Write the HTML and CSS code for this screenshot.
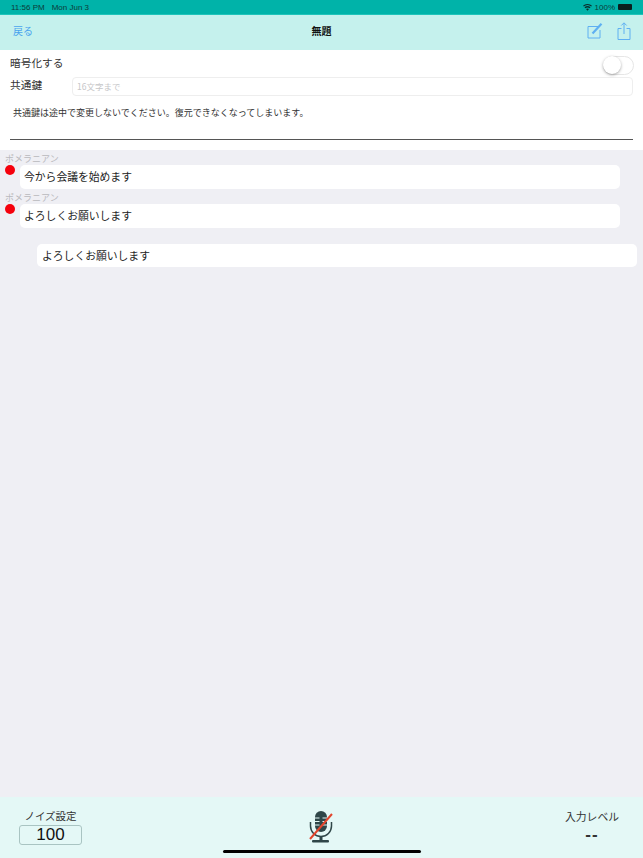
FILE: index.html
```html
<!DOCTYPE html>
<html lang="ja">
<head>
<meta charset="utf-8">
<title>無題</title>
<link rel="stylesheet" href="styles.css">
</head>
<body>
<div class="app">
  <div class="status">
    <span class="status-time">11:56 PM</span><span class="status-date">Mon Jun 3</span>
    <span class="status-right">
      <svg class="wifi" width="9" height="7" viewBox="0 0 11 8"><path d="M5.5 8 3.7 5.9a2.8 2.8 0 0 1 3.6 0zM2.9 5 1.8 3.8a5.7 5.7 0 0 1 7.4 0L8.1 5a4 4 0 0 0-5.2 0zM1 2.9 0 1.8a8.3 8.3 0 0 1 11 0L10 2.9a6.8 6.8 0 0 0-9 0z"/></svg>
      <span>100%</span>
      <span class="battery"></span>
    </span>
  </div>
  <div class="nav">
    <span class="nav-back">戻る</span>
    <span class="nav-title">無題</span>
    <span class="nav-icons">
      <svg width="16" height="16" viewBox="0 0 16 16" fill="none" stroke="#5fb0f2"><path d="M11 3.5H1v11.5h12V7"/><path d="M5.5 10.5 14.5.8" stroke-width="2.2"/></svg>
      <svg width="14" height="18" viewBox="0 0 14 18" fill="none" stroke="#5fb0f2"><path d="M4.5 6.5H1v11h12v-11H9.500"/><path d="M7 12V1M4.300 3.500 7 .8l2.700 2.700"/></svg>
    </span>
  </div>
  <div class="panel">
    <div class="row-toggle">
      <span class="label">暗号化する</span>
      <span class="toggle"><span class="knob"></span></span>
    </div>
    <div class="row-key">
      <span class="label key-label">共通鍵</span>
      <span class="key-input">16文字まで</span>
    </div>
    <p class="note">共通鍵は途中で変更しないでください。復元できなくなってしまいます。</p>
    <div class="rule"></div>
  </div>
  <div class="chat">
    <div class="message">
      <div class="sender">ポメラニアン</div>
      <div class="line"><span class="dot"></span><div class="bubble">今から会議を始めます</div></div>
    </div>
    <div class="message">
      <div class="sender">ポメラニアン</div>
      <div class="line"><span class="dot"></span><div class="bubble">よろしくお願いします</div></div>
    </div>
    <div class="message mine">
      <div class="bubble">よろしくお願いします</div>
    </div>
  </div>
  <div class="bottom">
    <div class="noise">
      <span class="bottom-label">ノイズ設定</span>
      <span class="noise-box">100</span>
    </div>
    <svg class="mic" width="28" height="33" viewBox="0 0 28 33">
      <rect x="8" y="0" width="12" height="21" rx="6" fill="#2f4648"/>
      <path d="M8 7h4.500M8 10.500h4.500M8 14h4.500M15.500 7H20M15.500 10.500H20M15.500 14H20" stroke="#e4f8f6" stroke-width="1"/>
      <path d="M3.500 11v4a10.500 10.500 0 0 0 21 0v-4" fill="none" stroke="#2f4648" stroke-width="1.500"/>
      <rect x="12.500" y="25" width="3" height="5" fill="#2f4648"/>
      <rect x="5" y="29" width="17" height="2.500" rx="1" fill="#2f4648"/>
      <path d="M3 28 25 3" stroke="#e2452c" stroke-width="2"/>
    </svg>
    <div class="level">
      <span class="bottom-label level-label">入力レベル</span>
      <span class="level-value">--</span>
    </div>
    <div class="home"></div>
  </div>
</div>
</body>
</html>
```
FILE: styles.css
```css
* { box-sizing: border-box; }
html, body { margin: 0; padding: 0; }
body {
  width: 643px;
  height: 858px;
  overflow: hidden;
  font-family: "Noto Sans CJK JP", "Liberation Sans", sans-serif;
  color: #222;
}
.app {
  width: 643px;
  height: 858px;
  display: flex;
  flex-direction: column;
  background: #efeff4;
}
.status {
  height: 15px;
  flex: none;
  background: #00b3a9;
  display: flex;
  align-items: center;
  padding: 0 11px 0 11px;
  font-family: "Liberation Sans", sans-serif;
  font-size: 8px;
  color: #0c3b3a;
  border-bottom: 1px solid #1fc4ba;
}
.status-date { margin-left: 7px; }
.status-right { margin-left: auto; display: flex; align-items: center; gap: 3px; }
.wifi { fill: #0a2f2e; }
.battery { width: 14px; height: 6px; background: #0a1f1f; border-radius: 1px; }
.nav {
  height: 35px;
  flex: none;
  background: #c5f1ed;
  display: flex;
  align-items: center;
  justify-content: center;
  position: relative;
}
.nav-back {
  position: absolute;
  left: 13px;
  top: 8px;
  font-size: 10px;
  line-height: 16px;
  color: #4aa4ee;
}
.nav-title { font-size: 10px; line-height: 16px; margin-bottom: 3px; font-weight: 700; color: #111; }
.nav-icons {
  position: absolute;
  right: 12px;
  top: 7px;
  display: flex;
  align-items: center;
  gap: 14px;
}
.panel {
  height: 100px;
  flex: none;
  background: #fff;
  padding: 0 10px;
  display: flex;
  flex-direction: column;
}
.label { font-size: 10.700px; line-height: 16px; color: #333; }
.row-toggle {
  height: 26px;
  display: flex;
  align-items: center;
  justify-content: space-between;
}
.row-key { height: 20px; display: flex; align-items: center; }
.row-key .key-label { width: 62px; flex: none; margin-bottom: 2px; }
.toggle {
  width: 31px;
  height: 19px;
  margin-top: 4px;
  margin-right: -1px;
  border: 1px solid #e6e6e6;
  border-radius: 10px;
  position: relative;
  background: #fff;
}
.knob {
  position: absolute;
  left: -1px;
  top: -1px;
  width: 18px;
  height: 18px;
  border-radius: 50%;
  background: #fff;
  box-shadow: 0 1px 3px rgba(0,0,0,.35);
}
.key-input {
  flex: 1;
  height: 19px;
  border: 1px solid #eee;
  border-radius: 4px;
  padding-left: 4px;
  font-size: 8.500px;
  line-height: 17px;
  color: #c6c6c8;
}
.note {
  margin: 11px 0 0 3px;
  font-size: 9px;
  line-height: 12px;
  color: #333;
}
.rule { height: 1px; margin-top: 20px; background: #555; }
.chat {
  flex: 1;
  padding: 4px 23px 0 5px;
  display: flex;
  flex-direction: column;
}
.sender { font-size: 9px; line-height: 10px; color: #b9b9bd; margin-bottom: 1px; }
.message { height: 39.300px; }
.line { display: flex; align-items: flex-start; }
.dot { width: 10px; height: 10px; flex: none; border-radius: 50%; background: #f5000c; }
.bubble {
  flex: 1;
  margin-left: 5px;
  height: 23.500px;
  padding-left: 4px;
  background: #fff;
  border-radius: 5px;
  font-size: 10.800px;
  line-height: 23px;
  color: #222;
}
.mine { padding-top: 11px; padding-left: 32px; }
.mine .bubble { margin-left: 0; margin-right: -17px; padding-left: 5px; }
.bottom {
  height: 61px;
  flex: none;
  background: #e4f8f6;
  position: relative;
  display: flex;
  justify-content: space-between;
  padding: 12px 0 0 19px;
}
.noise { width: 63px; display: flex; flex-direction: column; align-items: center; }
.bottom-label { font-size: 10.500px; line-height: 14px; color: #333; white-space: nowrap; }
.level-label { font-size: 10.800px; }
.noise-box {
  width: 63px;
  height: 20px;
  margin-top: 2px;
  border: 1px solid #a9c4c2;
  border-radius: 3px;
  text-align: center;
  font-family: "Liberation Sans", sans-serif;
  font-size: 17px;
  line-height: 18px;
  color: #111;
}
.mic { position: absolute; left: 307px; top: 14px; }
.level {
  width: 54px;
  margin-right: 24px;
  display: flex;
  flex-direction: column;
  align-items: center;
}
.level-value {
  margin-top: 2px;
  font-family: "Liberation Sans", sans-serif;
  font-size: 17px;
  line-height: 20px;
  font-weight: 700;
  letter-spacing: 1px;
  color: #333;
}
.home {
  position: absolute;
  left: 223px;
  bottom: 5px;
  width: 198px;
  height: 3px;
  border-radius: 2px;
  background: #000;
}
```
